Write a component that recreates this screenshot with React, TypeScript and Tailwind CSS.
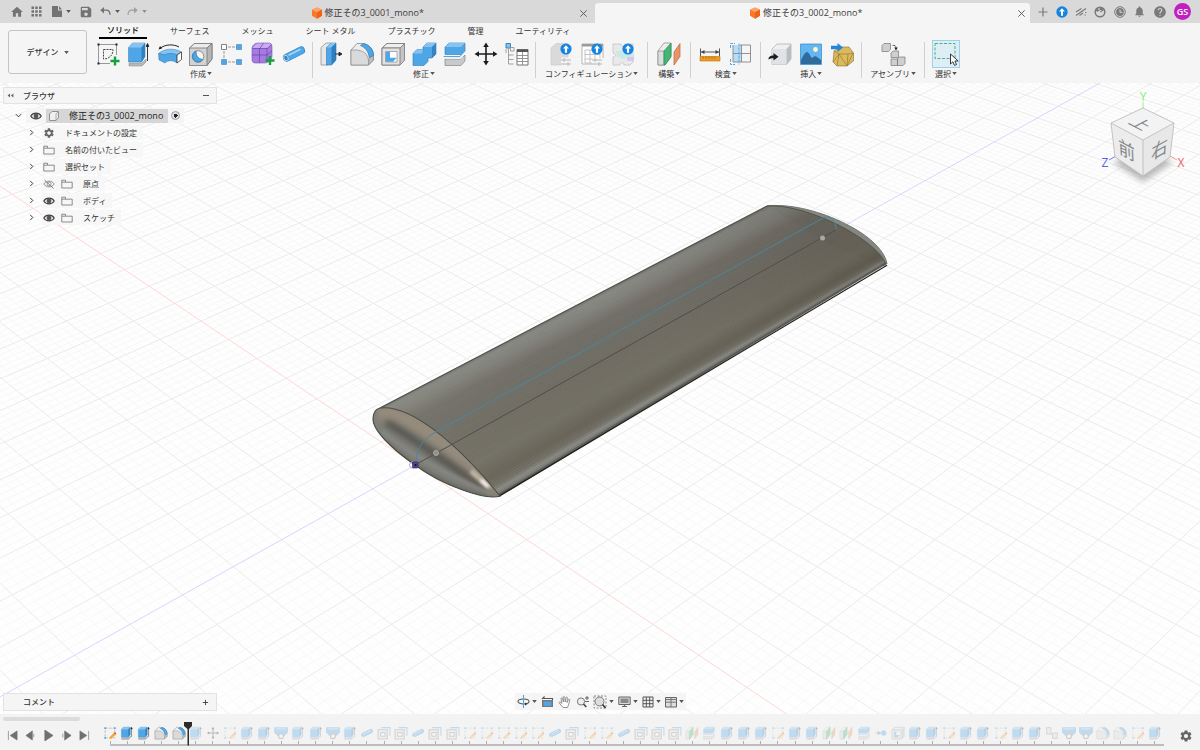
import React from "react";
import { MdHome, MdNotifications, MdHelp, MdSettings, MdSave } from "react-icons/md";

/* ---------- shared bits ---------- */

const BLUE = "#4ea6e6";
const BLUE_LIGHT = "#86c3f0";
const BLUE_DARK = "#2f78b4";

function Caret({ className = "text-[#555]" }: { className?: string }) {
  return (
    <svg viewBox="0 0 6 4" className={`h-[3px] w-[5px] shrink-0 ${className}`} aria-hidden="true">
      <path d="M0 0h6L3 4z" fill="currentColor" />
    </svg>
  );
}

function Plus({ x, y }: { x: number; y: number }) {
  return <path d={`M${x - 4.5} ${y}h9M${x} ${y - 4.5}v9`} stroke="#14a03c" strokeWidth="2.4" fill="none" />;
}

function Badge() {
  return (
    <g>
      <circle cx="18" cy="8" r="5.6" fill="#1583e0" />
      <path d="M18 4.2l3 3.400h-1.900v4.100h-2.200V7.600H15z" fill="#fff" />
    </g>
  );
}

function Adjust() {
  return <path d="M13 19h10M13 23h10M16 17.2v3.600M20 21.2v3.600" stroke="#b5b5b5" strokeWidth="1" fill="none" />;
}

type IconName =
  | "sketch" | "extrude" | "revolve" | "hole" | "pattern" | "form" | "pipe"
  | "press" | "fillet" | "shell" | "combine" | "split" | "move" | "params"
  | "cfgBody" | "cfgTable" | "cfgPuzzle" | "plane" | "measure" | "section"
  | "derive" | "canvas" | "mesh" | "assemble" | "select"
  | "editSketch" | "loft" | "offset" | "align" | "rigid";

function Glyph({ name }: { name: IconName }) {
  switch (name) {
    case "sketch":
      return (
        <g fill="none" stroke="#222">
          <path d="M3.500 3.500H22M3.500 3.500V22.500M3.500 22.500H15M21.500 3.500V14" stroke="#999" />
          <path d="M8.500 8.500h9.500c0 6-4 9.500-9.500 9.500z" stroke="#444" strokeDasharray="2 1" />
          <path d="M2.500 2.500h2v2h-2zM20.500 2.500h2v2h-2zM2.500 21.500h2v2h-2z" fill="#222" stroke="none" />
          <Plus x={20} y={20} />
        </g>
      );
    case "extrude":
      return (
        <g>
          <path d="M3 22l13 0 4-4v3l-4 4H3z" fill="#b8b8b8" stroke="#888" strokeWidth=".5" />
          <path d="M2.500 6.500l4-4.500h12.500v13.500l-3.500 5.500h-13z" fill={BLUE} stroke={BLUE_DARK} strokeWidth=".5" />
          <path d="M2.500 6.500l4-4.500h12.500l-3.500 4.500z" fill={BLUE_LIGHT} />
          <path d="M15.500 6.500L19 2v13.500l-3.500 5.500z" fill="#3181c0" />
          <path d="M21.500 20V3M20.200 5.500l1.300-3 1.300 3z" stroke="#222" strokeWidth=".9" fill="#222" />
        </g>
      );
    case "revolve":
      return (
        <g>
          <path d="M3 7.500C8 3 17 3 22 6" fill="none" stroke="#222" />
          <path d="M1.500 8.500l1.500-3.500 2 2.500z" fill="#222" />
          <path d="M1.500 12.500C8 7 18 7 24.500 11l-4.500 3c-5-2-9-2-12 0z" fill={BLUE_LIGHT} stroke={BLUE_DARK} strokeWidth=".5" />
          <path d="M1.500 12.500L8 14c3-2 8-2 12 0v8c-4-3-9-3-12 0l-6-3z" fill={BLUE} stroke={BLUE_DARK} strokeWidth=".5" />
          <path d="M20 14l4.500-3v7.500L20 22z" fill="#fff" stroke="#333" strokeWidth=".8" />
        </g>
      );
    case "hole":
      return (
        <g stroke="#777" strokeWidth=".8">
          <path d="M1.500 7l5-4.500h17.500v15.500l-5 6.500H1.500z" fill="#d3d3d3" />
          <path d="M1.500 7l5-4.500h17.500L19 7z" fill="#ececec" />
          <path d="M19 7l5-4.500V18l-5 6.500z" fill="#b5b5b5" />
          <circle cx="10" cy="15.500" r="5.800" fill="#f5f5f5" />
          <path d="M8 10.200a5.600 5.600 0 1 0 6.800 8.200C10 18 8 15 8 10.200z" fill={BLUE} stroke={BLUE_DARK} />
        </g>
      );
    case "pattern":
      return (
        <g>
          <path d="M5 6h15M5 21h15M5 6v15" stroke="#999" fill="none" strokeDasharray="3 1" />
          <path d="M2.500 3.500h5v5h-5z" fill="#fff" stroke="#666" strokeWidth=".8" />
          <path d="M17.500 3.500h5v5h-5zM2.500 18.500h5v5h-5zM17.500 18.500h5v5h-5z" fill={BLUE} stroke={BLUE_DARK} strokeWidth=".5" />
        </g>
      );
    case "form":
      return (
        <g>
          <path d="M2 8c0-4 3-6 7-6h9c3 0 4 1 4 4v8c0 5-3 8-8 8H6c-3 0-4-1-4-4z" fill="#a57be0" stroke="#7a4fb8" strokeWidth=".6" />
          <path d="M3 7c2-4 4-4.500 8-4.500h8c2 0 2 2 1 2.500-2 2-4 2.500-7 2.500z" fill="#c9acf0" />
          <path d="M2 14h15l5-4M9.500 22V8l4-6M17 21V8l4-4M2.500 7.500H17" fill="none" stroke="#6b3fa8" strokeWidth=".7" />
          <Plus x={20} y={19.500} />
        </g>
      );
    case "pipe":
      return (
        <g>
          <path d="M6 16.500L20 9.500" stroke={BLUE_DARK} strokeWidth="8" strokeLinecap="round" />
          <path d="M6 16.500L20 9.500" stroke={BLUE} strokeWidth="7" strokeLinecap="round" />
          <path d="M8 14L19 8.500" stroke="#a7d5f5" strokeWidth="1.600" strokeLinecap="round" />
          <ellipse cx="5" cy="17" rx="2" ry="2.800" fill="#3684bf" stroke="#d8edfa" strokeWidth=".7" transform="rotate(-25 5 17)" />
        </g>
      );
    case "press":
      return (
        <g>
          <path d="M3 6.500L8 2h5l-3 4v18H3z" fill="#e6e6e6" stroke="#888" strokeWidth=".7" />
          <path d="M8.500 6.500L13 2h5v17l-4.500 5h-5z" fill={BLUE} stroke={BLUE_DARK} strokeWidth=".6" />
          <path d="M8.500 6.500L13 2h5l-4.500 4.500z" fill={BLUE_LIGHT} />
          <path d="M13.500 6.500L18 2v17l-4.500 5z" fill="#2f7dbd" />
          <path d="M17 13h5M21 11.200l3 1.800-3 1.800z" stroke="#222" strokeWidth=".9" fill="#222" />
        </g>
      );
    case "fillet":
      return (
        <g strokeWidth=".7">
          <path d="M2 9l6-6.500h4C19 2.500 24.500 8 24.500 15v4l-5 5H2z" fill="#ededed" stroke="#777" />
          <path d="M19.500 24v-4c0-3 1-4 5-6v5z" fill="#bdbdbd" stroke="#888" />
          <path d="M2 9h4c8 0 13.500 4 13.500 11.500V24H2z" fill="#dadada" stroke="#8a8a8a" />
          <path d="M11.500 4.500l3-2C20 3.500 24.500 8 24.500 14.500l-4.200 2C19.500 10 16 6.500 11.500 4.500z" fill={BLUE} stroke={BLUE_DARK} />
        </g>
      );
    case "shell":
      return (
        <g strokeWidth=".8" stroke="#777">
          <path d="M2 7l5-4.500h17.500v17L20 24H2z" fill="#c4c4c4" />
          <path d="M2 7l5-4.500h17.500L20 7z" fill="#efefef" />
          <path d="M2 7h18v17H2z" fill="#e2e2e2" />
          <path d="M5.500 10.500h11.500v10.500h-11.500z" fill="#fff" stroke="#999" />
          <path d="M5.800 10.800h4.200v6h6.700L13 20.700H5.800z" fill={BLUE} stroke="none" />
        </g>
      );
    case "combine":
      return (
        <g stroke={BLUE_DARK} strokeWidth=".6">
          <path d="M2 12.500l4-4h6V6l4-4h9v11l-4 4h-4v3.500L13 24.500H2z" fill={BLUE} />
          <path d="M2 12.500l4-4h6l-1 4zM12 6l4-4h9l-4 4z" fill={BLUE_LIGHT} stroke="none" />
          <path d="M21 6l4-4v11l-4 4z" fill="#3585c5" stroke="none" />
        </g>
      );
    case "split":
      return (
        <g strokeWidth=".6">
          <path d="M3 6l4-4h16v7l-4 4.500H3z" fill={BLUE} stroke={BLUE_DARK} />
          <path d="M3 6l4-4h16l-4 4z" fill={BLUE_LIGHT} />
          <path d="M3 18h16l4-4v6l-4 4.500H3z" fill="#c9c9c9" stroke="#777" />
          <path d="M3 18l3-2h15l-2 2z" fill="#eee" />
          <path d="M1.500 15.500H18l5.500-6" stroke={BLUE} fill="none" strokeWidth="1" />
        </g>
      );
    case "move":
      return (
        <g stroke="#1c1c1c" fill="#1c1c1c">
          <path d="M13 4v18M4 13h18" strokeWidth="1.600" />
          <path d="M13 1.500l2.800 4.500h-5.600zM13 24.500l2.800-4.500h-5.600zM1.500 13L6 10.200v5.600zM24.500 13L20 10.200v5.600z" stroke="none" />
        </g>
      );
    case "params":
      return (
        <g fill="none" strokeWidth=".9">
          <path d="M2 2.500h4.500V7H2z" fill={BLUE_LIGHT} stroke={BLUE_DARK} />
          <path d="M6.500 6.500H10V10H6.500zM2 8v4" stroke="#999" />
          <path d="M4.500 7v16M4.500 14h5M4.500 18.500h5M4.500 23h5" stroke="#999" />
          <path d="M13 8.500h11v15.500H13z" fill="#fff" stroke="#666" />
          <path d="M13 8.500h11v2.500H13z" fill="#555" />
          <path d="M13 14.500h11M13 17.500h11M13 20.500h11M18.500 11v13" stroke="#8a8a8a" />
        </g>
      );
    case "cfgBody":
      return (
        <g>
          <path d="M3 7l5-4.500h12V20l-4 4H3z" fill="#dadada" stroke="#c8c8c8" strokeWidth=".6" />
          <path d="M13 16.500h12V25H13z" fill="#f5f5f5" />
          <Adjust />
          <Badge />
        </g>
      );
    case "cfgTable":
      return (
        <g>
          <path d="M3 3h21v20H3z" fill="#fff" stroke="#b5b5b5" />
          <path d="M3 3h21v2.500H3z" fill="#9a9a9a" />
          <path d="M6 9h15v13H6zM6 13.500h15M6 18h15M11 9v13M16 9v13" fill="none" stroke="#c2c2c2" />
          <path d="M13 17h12v8H13z" fill="#f5f5f5" />
          <Adjust />
          <Badge />
        </g>
      );
    case "cfgPuzzle":
      return (
        <g>
          <path d="M3 3h8c0 3 4 3 4 0h8v18l-3 3h-6c0-3-4-3-4 0H3v-8c3 0 3-4 0-4z" fill="#e9e9e9" stroke="#c2c2c2" strokeWidth=".8" />
          <path d="M6 10h6c0 3 4 3 4 0h7v6h-7c0 3-5 3-6 0H7z" fill="#c6e9ea" />
          <path d="M17 16h7v4h-7z" fill="#d9c6ee" />
          <Badge />
        </g>
      );
    case "plane":
      return (
        <g strokeWidth=".7">
          <path d="M2 10l6-8h7v13l-6 9H2z" fill="#eee" stroke="#888" />
          <path d="M2 10h6v14H2z" fill="#ddd" stroke="#888" />
          <path d="M8 10l7-8v14l-6 8H8z" fill="#43b671" stroke="#2a8a50" />
          <path d="M18 11l6-8.500v13L18 24z" fill="#e79467" stroke="#b8683c" />
        </g>
      );
    case "measure":
      return (
        <g>
          <path d="M3.500 7.500v8M22.500 7.500v8M4 11h18" stroke="#555" fill="none" />
          <path d="M4 11l3.500-2v4zM22 11l-3.500-2v4z" fill="#444" />
          <path d="M3 15.500h20v4.500H3z" fill="#f29a1f" stroke="#b87412" strokeWidth=".6" />
          <path d="M6 15.500v2M9 15.500v2M12 15.500v2M15 15.500v2M18 15.500v2" stroke="#8a5a10" strokeWidth=".7" />
        </g>
      );
    case "section":
      return (
        <g fill="none">
          <path d="M5 4h8v17H5z" fill="#b9dcf6" />
          <path d="M12 4h10.500v17H5V4M5 12.500h17.500M13.500 4v17" stroke="#888" strokeWidth=".9" />
          <path d="M2.500 7V2.500H7M2.500 18v5.500H7M11 2.500v21" stroke={BLUE} strokeDasharray="3 1" />
        </g>
      );
    case "derive":
      return (
        <g>
          <path d="M5 8l5-5h14v15l-4.500 5.500H5z" fill="#f0f0f0" stroke="#aaa" strokeWidth=".7" />
          <path d="M5 8h14.500v15.500H5z" fill="#e0e2e7" />
          <path d="M19.500 8L24 3v15l-4.500 5.500z" fill="#b9bcc2" />
          <path d="M1.500 18.500c0-3 2-4 5-4V12l5 3.800-5 3.700v-2.300c-2.500 0-3.500.300-5 1.300z" fill="#1c1c1c" />
        </g>
      );
    case "canvas":
      return (
        <g>
          <path d="M2.500 3h21v20.500h-21z" fill="#63b6f2" stroke="#2f86c7" strokeWidth=".7" />
          <circle cx="17.500" cy="8.500" r="2.400" fill="#fdf6c8" />
          <path d="M3 19c2-4 4-8 6-8s3 4 5 6c2-2 4-2 5-1l4 3v4H3z" fill="#2f6c9b" />
        </g>
      );
    case "mesh":
      return (
        <g strokeWidth=".6" stroke="#8a7030">
          <path d="M5 10l6-4h9l4.500 6v8L18 25H8l-4-4z" fill="#dcb95c" />
          <path d="M5 10l5 3h9l5.500-1M10 13l-2 12M19 13l-1 12M4 21l6-8 8 12 6-13" fill="none" />
          <path d="M2 4.800h6.500V2l5.500 4.500-5.500 4.500V8.200H2z" fill="#2287dc" stroke="none" />
        </g>
      );
    case "assemble":
      return (
        <g fill="#cfcfcf" stroke="#777" strokeWidth=".7">
          <path d="M2 4.500l2-2h6.500v6l-2 2H2z" />
          <path d="M11 12l2-2h5.500v6.500H11z" />
          <path d="M11 18h6.500v6.500H11zM17.500 18l2-2H25v6.500l-2 2h-5.500z" />
          <path d="M12.500 4.500c2-.5 3.500 0 3.500 2.500" fill="none" stroke="#222" />
          <path d="M14.300 6.500h3.400L16 9.500z" fill="#222" stroke="none" />
        </g>
      );
    case "select":
      return (
        <g>
          <path d="M2 2.500h20v15H2z" fill="none" stroke="#4db37a" strokeDasharray="3 1.500" />
          <path d="M17.500 13v10l2.400-2.200 1.600 3.600 2-.9-1.600-3.500h3.300z" fill="#fff" stroke="#222" strokeWidth=".9" />
        </g>
      );
    case "editSketch":
      return (
        <g fill="none">
          <path d="M4 4h18v18H4z" stroke="#aaa" strokeWidth="1.300" strokeDasharray="5 2" />
          <path d="M2.500 2.500h3v3h-3zM20.500 2.500h3v3h-3zM2.500 20.500h3v3h-3z" fill="#4ea6e6" />
          <path d="M12 24l1-4 7-7 3 3-7 7z" fill="#f5a623" />
          <path d="M20 13l3 3 2-2-3-3z" fill="#e24b3b" />
        </g>
      );
    case "loft":
      return (
        <g strokeWidth="1">
          <path d="M1 3h24v9l-6 6H7l-6-6z" fill={BLUE} stroke={BLUE_DARK} />
          <path d="M1 3h24l-5 4H6z" fill={BLUE_LIGHT} />
          <circle cx="13" cy="19" r="4.500" fill="#f5f5f5" stroke="#777" strokeWidth="2" />
        </g>
      );
    case "offset":
      return (
        <g fill="none" strokeWidth="2">
          <path d="M8 3h16v15" stroke={BLUE} />
          <path d="M2 7h17v17H2z" stroke="#888" fill="#e6e6e6" />
          <path d="M7 12h8v7H7z" stroke="#888" fill="#fff" />
        </g>
      );
    case "align":
      return (
        <g>
          <path d="M3 13h9" stroke="#777" strokeWidth="2" />
          <path d="M7 9l6 4-6 4z" fill="#777" />
          <circle cx="18" cy="13" r="5" fill={BLUE} />
        </g>
      );
    case "rigid":
      return (
        <g fill="#ddd" stroke="#888" strokeWidth="1.500">
          <path d="M3 3h8v12H3zM9 15h6M14 13h9v10h-9z" />
        </g>
      );
  }
}

function Icon({ name, className = "size-[26px]" }: { name: IconName; className?: string }) {
  return (
    <svg viewBox="0 0 26 26" className={`shrink-0 ${className}`} aria-hidden="true">
      <Glyph name={name} />
    </svg>
  );
}

/* ---------- title bar ---------- */

function DocCube() {
  return (
    <svg viewBox="0 0 12 12" className="size-3 shrink-0" aria-hidden="true">
      <path d="M6 .5l5 2.300v6L6 11.700 1 8.800v-6z" fill="#f9762b" />
      <path d="M6 .5l5 2.300L6 5.300 1 2.800z" fill="#ffa468" />
      <path d="M6 5.300l5-2.500v6L6 11.700z" fill="#ee6414" />
    </svg>
  );
}

function DocTab({ title, active = false }: { title: string; active?: boolean }) {
  return (
    <div
      className={
        active
          ? "mt-[3px] flex flex-1 items-center rounded-t-[3px] bg-[#f5f5f5] pr-1"
          : "mt-[3px] flex flex-1 items-center pr-[7px]"
      }
    >
      <button type="button" className="flex flex-1 items-center justify-center gap-[2px] text-[9px] leading-4 text-[#3c3c3c]">
        <DocCube />
        {title}
      </button>
      <button type="button" aria-label="閉じる" className="text-[#555]">
        <svg viewBox="0 0 10 10" className="size-[9px]" aria-hidden="true">
          <path d="M1.500 1.500l7 7M8.500 1.500l-7 7" stroke="currentColor" strokeWidth="1" />
        </svg>
      </button>
    </div>
  );
}

function TitleBar() {
  return (
    <header className="flex h-[23px] shrink-0 bg-[#d9d9d9]">
      <div className="flex w-[156px] shrink-0 items-center pl-[10px] text-[#737373]">
        <button type="button" aria-label="ホーム"><MdHome className="size-[14px]" /></button>
        <button type="button" aria-label="データ パネル" className="ml-[7px]">
          <svg viewBox="0 0 11 11" className="size-[11px]" aria-hidden="true">
            <path d="M.5.5h2.500V3H.5zM4.200.5h2.500V3H4.200zM8 .5h2.500V3H8zM.5 4.200h2.500v2.500H.5zM4.200 4.200h2.500v2.500H4.200zM8 4.200h2.500v2.500H8zM.5 8h2.500v2.500H.5zM4.200 8h2.500v2.500H4.200zM8 8h2.500v2.500H8z" fill="currentColor" />
          </svg>
        </button>
        <button type="button" aria-label="ファイル" className="ml-[10px] flex items-center gap-1">
          <svg viewBox="0 0 10 11" className="h-[11px] w-[10px]" aria-hidden="true">
            <path d="M0 0h6v4.500h4V11H0zM7 0l3 3.500H7z" fill="currentColor" />
          </svg>
          <Caret />
        </button>
        <button type="button" aria-label="保存" className="ml-[8px]"><MdSave className="size-[14px]" /></button>
        <button type="button" aria-label="元に戻す" className="ml-[7px] flex items-center gap-1">
          <svg viewBox="0 0 11 9" className="h-[9px] w-[11px]" aria-hidden="true">
            <path d="M1 3.200h5c2.500 0 4 1.500 4 4.500" fill="none" stroke="currentColor" strokeWidth="1.300" />
            <path d="M4 0L.3 3.200 4 6.500z" fill="currentColor" />
          </svg>
          <Caret />
        </button>
        <button type="button" aria-label="やり直し" className="ml-[7px] flex items-center gap-1 text-[#a0a0a0]">
          <svg viewBox="0 0 11 9" className="h-[9px] w-[11px]" aria-hidden="true">
            <path d="M10 3.200H5C2.500 3.200 1 4.700 1 7.700" fill="none" stroke="currentColor" strokeWidth="1.300" />
            <path d="M7 0l3.700 3.200L7 6.500z" fill="currentColor" />
          </svg>
          <Caret className="text-[#909090]" />
        </button>
      </div>
      <DocTab title="修正その3_0001_mono*" />
      <DocTab title="修正その3_0002_mono*" active />
      <div className="flex w-[170px] shrink-0 items-center justify-between pr-[9px] pl-[7px] text-[#7a7a7a]">
        <button type="button" aria-label="新規デザイン">
          <svg viewBox="0 0 12 12" className="size-3" aria-hidden="true"><path d="M6 1.500v9M1.500 6h9" stroke="currentColor" strokeWidth="1.200" /></svg>
        </button>
        <button type="button" aria-label="拡張機能">
          <svg viewBox="0 0 12 12" className="size-3" aria-hidden="true">
            <circle cx="6" cy="6" r="5.700" fill="#1583e0" />
            <path d="M6 2.200l3 3.300H7v4.200H5V5.500H3z" fill="#fff" />
          </svg>
        </button>
        <button type="button" aria-label="オンライン状態">
          <svg viewBox="0 0 12 12" className="size-3" aria-hidden="true">
            <path d="M1 6L6.500 2.500M1 9.500L11 2.500M4.500 9.500L8 7" stroke="currentColor" strokeWidth="1.200" fill="none" />
            <path d="M10 6.500h1.300M9.500 9h1.300" stroke="currentColor" strokeWidth="1.200" />
          </svg>
        </button>
        <button type="button" aria-label="更新">
          <svg viewBox="0 0 12 12" className="size-3" aria-hidden="true">
            <circle cx="6" cy="6" r="4.800" fill="none" stroke="currentColor" strokeWidth="1.500" />
            <path d="M1 4.500l2.500 1.300L6 4.500 3.500 2z" fill="currentColor" />
            <path d="M6 1l4.500 2.500L7 6.500 5 4z" fill="currentColor" />
            <path d="M4.500 3.500l3 1.500" stroke="#d9d9d9" />
          </svg>
        </button>
        <button type="button" aria-label="ジョブ ステータス">
          <svg viewBox="0 0 12 12" className="size-3" aria-hidden="true">
            <circle cx="6" cy="6" r="5.300" fill="none" stroke="currentColor" strokeWidth="1" />
            <circle cx="6" cy="6" r="3.900" fill="currentColor" />
            <path d="M6 3.500V6.300h2.500" stroke="#d9d9d9" fill="none" />
          </svg>
        </button>
        <button type="button" aria-label="通知"><MdNotifications className="size-[13px]" /></button>
        <button type="button" aria-label="ヘルプ"><MdHelp className="size-[14px]" /></button>
        <button type="button" className="size-[17px] rounded-full bg-[#c21fc2] text-[9px] leading-[17px] font-semibold text-white">GS</button>
      </div>
    </header>
  );
}

/* ---------- ribbon ---------- */

const WORKSPACE_TABS = ["ソリッド", "サーフェス", "メッシュ", "シート メタル", "プラスチック", "管理", "ユーティリティ"];

const GROUPS: { label: string; icons: IconName[]; pad: string }[] = [
  { label: "作成", icons: ["sketch", "extrude", "revolve", "hole", "pattern", "form", "pipe"], pad: "pr-[5px]" },
  { label: "修正", icons: ["press", "fillet", "shell", "combine", "split", "move", "params"], pad: "px-[5px]" },
  { label: "コンフィギュレーション", icons: ["cfgBody", "cfgTable", "cfgPuzzle"], pad: "px-[9px]" },
  { label: "構築", icons: ["plane"], pad: "px-2" },
  { label: "検査", icons: ["measure", "section"], pad: "px-[6px]" },
  { label: "挿入", icons: ["derive", "canvas", "mesh"], pad: "px-[6px]" },
  { label: "アセンブリ", icons: ["assemble"], pad: "px-2" },
  { label: "選択", icons: ["select"], pad: "px-[7px]" },
];

function Ribbon() {
  return (
    <div className="flex h-[60px] shrink-0 bg-[#f5f5f5] text-[8px] text-[#333]">
      <div className="py-[7px] pr-2 pl-2">
        <button type="button" className="flex h-11 w-[79px] items-center justify-center gap-[5px] rounded-[3px] border border-[#c4c4c4] bg-[#f5f5f5] font-medium">
          デザイン
          <Caret />
        </button>
      </div>
      <div className="flex flex-col">
        <nav className="flex h-4 items-stretch pl-1">
          {WORKSPACE_TABS.map((t, i) => (
            <button
              key={t}
              type="button"
              className={
                i === 0
                  ? "mr-[7px] border-b-2 border-black px-2 leading-[14px] font-medium text-black"
                  : "px-4 leading-[14px]"
              }
            >
              {t}
            </button>
          ))}
        </nav>
        <div className="flex pt-[2px]">
          {GROUPS.map((g, i) => (
            <section key={g.label} className="flex">
              <div className={`flex flex-col items-center ${g.pad}`}>
                <div className="flex gap-[5px]">
                  {g.icons.map((n) => (
                    <button
                      key={n}
                      type="button"
                      aria-label={`${g.label} ${n}`}
                      className={n === "select" ? "-my-px border border-[#9fd0ea] bg-[#ddeef7]" : ""}
                    >
                      <Icon name={n} />
                    </button>
                  ))}
                </div>
                <button type="button" className="flex items-center gap-px leading-[13px] whitespace-nowrap">
                  {g.label}
                  <Caret />
                </button>
              </div>
              {i < GROUPS.length - 1 && <div className="mt-px h-9 w-px bg-[#d0d0d0]" />}
            </section>
          ))}
        </div>
      </div>
    </div>
  );
}

/* ---------- viewport scene ---------- */

type Pt = [number, number];

/* Ground plane cell (u, v) to screen, through the camera's perspective. */
function project(u: number, v: number): Pt {
  const n = u + v;
  const w = 1 - 0.01979 * n;
  return [594 + (-178.5 + 38.4 * (u - v)) / w, (465 + 14.2 * n) / w];
}

function gridPath(keep: (i: number) => boolean) {
  const near = 10.5;
  const far = -29;
  let d = "";
  for (let i = -150; i <= 110; i++) {
    if (!keep(i)) continue;
    const c = i / 5;
    const a = project(c, far - c);
    const b = project(c, near - c);
    const e = project(far - c, c);
    const f = project(near - c, c);
    d += `M${a[0].toFixed(1)} ${a[1].toFixed(1)}L${b[0].toFixed(1)} ${b[1].toFixed(1)}`;
    d += `M${e[0].toFixed(1)} ${e[1].toFixed(1)}L${f[0].toFixed(1)} ${f[1].toFixed(1)}`;
  }
  return d;
}

const MINOR = gridPath((i) => i % 5 !== 0);
const MAJOR = gridPath((i) => i % 5 === 0 && i !== 0);

function bezier(p: Pt[], t: number): Pt {
  const s = 1 - t;
  const k = [s * s * s, 3 * s * s * t, 3 * s * t * t, t * t * t];
  return [
    p[0][0] * k[0] + p[1][0] * k[1] + p[2][0] * k[2] + p[3][0] * k[3],
    p[0][1] * k[0] + p[1][1] * k[1] + p[2][1] * k[2] + p[3][1] * k[3],
  ];
}

const NEAR_ARC: Pt[] = [[380, 408], [410, 404], [457, 443], [500, 496]];
const FAR_ARC: Pt[] = [[767, 206], [802, 203], [873, 236], [886, 264]];

const SHADES: [number, number, number, number][] = [
  [0, 112, 114, 107],
  [0.08, 136, 138, 132],
  [0.2, 130, 130, 124],
  [0.34, 113, 109, 102],
  [0.48, 109, 108, 101],
  [0.62, 110, 106, 97],
  [0.8, 113, 110, 99],
  [0.9, 101, 96, 84],
  [0.945, 112, 109, 100],
  [0.975, 142, 144, 139],
  [1, 70, 70, 66],
];

function shade(t: number) {
  let i = 0;
  while (i < SHADES.length - 2 && SHADES[i + 1][0] < t) i++;
  const a = SHADES[i];
  const b = SHADES[i + 1];
  const f = (t - a[0]) / (b[0] - a[0]);
  const mix = (j: number) => Math.round(a[j] + (b[j] - a[j]) * f);
  return `rgb(${mix(1)},${mix(2)},${mix(3)})`;
}

const STRIPS = Array.from({ length: 80 }, (_, i) => {
  const t0 = i / 80;
  const t1 = (i + 1) / 80;
  const pts = [bezier(NEAR_ARC, t0), bezier(FAR_ARC, t0), bezier(FAR_ARC, t1), bezier(NEAR_ARC, t1)];
  return { fill: shade((t0 + t1) / 2), points: pts.map((p) => p.map((c) => c.toFixed(2)).join(",")).join(" ") };
});

const CAP = "M380 408C410 404 457 443 500 496C485 501 440 484 415 465C392 449 372 430 373 418C374 411 376 409 380 408Z";

function Scene() {
  const zNear = project(0, 10);
  const zFar = project(0, -28);
  const xNear = project(10, 0);
  const xFar = project(-28, 0);
  return (
    <svg viewBox="0 83 1200 631" preserveAspectRatio="xMidYMid slice" className="absolute inset-0 size-full" aria-label="3D ビュー" role="img">
      <defs>
        <clipPath id="cap"><path d={CAP} /></clipPath>
        <filter id="soft" x="-20%" y="-20%" width="140%" height="140%"><feGaussianBlur stdDeviation="3" /></filter>
        <filter id="soft2" x="-50%" y="-50%" width="200%" height="200%"><feGaussianBlur stdDeviation="1.600" /></filter>
        <linearGradient id="along" gradientUnits="userSpaceOnUse" x1="440" y1="460" x2="830" y2="240">
          <stop offset="0" stopColor="#8a8a7a" stopOpacity=".16" />
          <stop offset=".5" stopColor="#6a675c" stopOpacity=".05" />
          <stop offset="1" stopColor="#3c362a" stopOpacity=".2" />
        </linearGradient>
      </defs>
      <rect x="-600" y="0" width="2400" height="900" fill="#fefefe" />
      <path d={MINOR} stroke="#f8f8f8" strokeWidth="1" fill="none" />
      <path d={MAJOR} stroke="#ebebeb" strokeWidth="1" fill="none" />
      <path d={`M${xFar.join(" ")}L${xNear.join(" ")}`} stroke="#ffd6d6" strokeWidth="1" />
      <path d={`M${zFar.join(" ")}L${zNear.join(" ")}`} stroke="#d6d6ff" strokeWidth="1" />

      {/* wing body */}
      <path d="M767 206C809 201 882 233 887 264L884 266L830 245Z" fill="#858881" />
      {STRIPS.map((s, i) => (
        <polygon key={i} points={s.points} fill={s.fill} stroke={s.fill} strokeWidth=".7" />
      ))}
      <path d="M380 408L767 206C802 203 873 236 886 264L500 496C457 443 410 404 380 408Z" fill="url(#along)" />
      <path d="M767 206C809 201 882 233 887 264" fill="none" stroke="#73766f" strokeWidth="1" />
      <path d="M767 206C802 203 873 236 886 264" fill="none" stroke="#55544d" strokeWidth="1" />
      <path d="M380 408L767 206" stroke="#55564f" strokeWidth="1.200" />
      <path d="M498 496.700L887 265.200" stroke="#1f1d19" strokeWidth="1.200" />

      {/* near end cap */}
      <path d={CAP} fill="#7d7e77" />
      <g clipPath="url(#cap)" fill="none">
        <path d="M378 413C410 410 460 452 496 492" stroke="#958b7d" strokeWidth="16" filter="url(#soft)" />
        <path d="M386 422C412 437 450 466 488 490" stroke="#4a463f" strokeWidth="6" filter="url(#soft)" opacity=".9" />
        <path d="M382 431C410 455 450 476 490 494" stroke="#858682" strokeWidth="4" filter="url(#soft2)" />
        <path d="M386 442C410 466 450 488 492 499" stroke="#6a6c63" strokeWidth="4" filter="url(#soft2)" />
        <path d="M471 471L490 488" stroke="#c0b6a6" strokeWidth="5" filter="url(#soft2)" />
        <path d="M481 480L488 486.500" stroke="#fff" strokeWidth="3" filter="url(#soft2)" />
      </g>
      <path d={CAP} fill="none" stroke="#4a4b44" strokeWidth="1.100" />

      {/* sketch curves */}
      <path d="M416 464C416 446 425 437 440 430L823 218C830 215 836 220 836 230" fill="none" stroke="#4a86a0" strokeWidth="1" />
      <path d="M415 465L836 230" stroke="#4f4e49" strokeWidth="1" />
      <circle cx="436" cy="453" r="2.500" fill="#8f8f89" stroke="#b5b5af" strokeWidth=".8" />
      <circle cx="822.500" cy="238" r="2.500" fill="#a9a9a4" />
      <circle cx="412.500" cy="465" r="3" fill="none" stroke="#aaa" />
      <rect x="412.500" y="462" width="5.500" height="6" rx="1" fill="#5a3d9a" stroke="#2b2050" strokeWidth=".6" />
      <circle cx="415.500" cy="465" r="1" fill="#111" />
    </svg>
  );
}

function ViewCube() {
  return (
    <svg viewBox="0 -6 96 106" className="h-[106px] w-24" role="img" aria-label="ビューキューブ">
      <defs>
        <filter id="shadow" x="-30%" y="-30%" width="160%" height="160%"><feGaussianBlur stdDeviation="3" /></filter>
      </defs>
      <path d="M16 72L46 92L76 72L46 60Z" fill="#888" opacity=".6" filter="url(#shadow)" />
      <path d="M46 12v7" stroke="#8ff58f" />
      <path d="M12 70l7-4" stroke="#7d7de8" />
      <path d="M80 70l-7-4" stroke="#f59a9a" />
      <path d="M46 18L77 33L46 50L14 33Z" fill="#f3f3f3" />
      <path d="M14 33L46 50V86L18 67Z" fill="#ececec" />
      <path d="M77 33L46 50V86L73 67Z" fill="#e8e8e8" />
      <path d="M46 18L77 33L46 50L14 33ZM14 33L18 67L46 86L73 67L77 33M46 50V86" fill="none" stroke="#bdbdbd" strokeWidth=".9" />
      <g fill="#85888c" fontSize="19" textAnchor="middle">
        <text transform="matrix(.8 .42 -.8 .42 38 37)">上</text>
        <text transform="matrix(.88 .46 .06 1 30 67)">前</text>
        <text transform="matrix(.88 -.5 -.06 1 62 66)">右</text>
      </g>
      <g fontSize="12" textAnchor="middle">
        <text x="46" y="11" fill="#7dee7d">Y</text>
        <text x="8" y="77" fill="#5c5ce6">Z</text>
        <text x="84" y="77" fill="#f06060">X</text>
      </g>
    </svg>
  );
}

/* ---------- browser panel ---------- */

function Chevron({ open = false }: { open?: boolean }) {
  return (
    <svg viewBox="0 0 8 8" className="size-[7px]" aria-hidden="true">
      <path d={open ? "M1 2.500l3 3 3-3" : "M2.500 1l3 3-3 3"} stroke="#333" strokeWidth="1.100" fill="none" />
    </svg>
  );
}

function Eye({ hidden = false }: { hidden?: boolean }) {
  return (
    <svg viewBox="0 0 12 10" className="h-[10px] w-3" aria-hidden="true">
      <path d="M.8 5C3 1.200 9 1.200 11.200 5 9 8.800 3 8.800.8 5z" fill="none" stroke={hidden ? "#888" : "#444"} strokeWidth={hidden ? 0.9 : 1.2} />
      <circle cx="6" cy="5" r="2" fill={hidden ? "none" : "#555"} stroke={hidden ? "#888" : "#444"} strokeWidth=".8" />
      {hidden && <path d="M1.500 1l9 8.500" stroke="#777" strokeWidth=".9" />}
    </svg>
  );
}

function Folder() {
  return (
    <svg viewBox="0 0 12 10" className="h-[10px] w-3" aria-hidden="true">
      <path d="M.8 9V1.200h3.700v2h6.700V9zM.8 3.200h3.700" fill="none" stroke="#808080" strokeWidth=".9" />
    </svg>
  );
}

const TREE: { label: string; icon: "gear" | "folder"; eye?: "on" | "off" }[] = [
  { label: "ドキュメントの設定", icon: "gear" },
  { label: "名前の付いたビュー", icon: "folder" },
  { label: "選択セット", icon: "folder" },
  { label: "原点", icon: "folder", eye: "off" },
  { label: "ボディ", icon: "folder", eye: "on" },
  { label: "スケッチ", icon: "folder", eye: "on" },
];

function BrowserPanel() {
  return (
    <aside className="ml-[3px] w-[214px] pt-1 text-[8px] text-[#333]">
      <div className="flex h-[17px] items-center border border-[#e2e2e2] bg-[#f5f5f5] pr-[7px] pl-[3px]">
        <button type="button" aria-label="折りたたむ" className="w-4">
          <svg viewBox="0 0 8 6" className="h-[5px] w-[7px]" aria-hidden="true"><path d="M3.500.5v5L.5 3zM7.500.5v5l-3-2.500z" fill="#666" /></svg>
        </button>
        <h2 className="flex-1 font-medium">ブラウザ</h2>
        <button type="button" aria-label="最小化" className="h-px w-[6px] bg-[#555]" />
      </div>
      <ul className="pt-[3px]">
        <li className="flex h-[17px] items-center pl-3">
          <button type="button" aria-label="閉じる"><Chevron open /></button>
          <div className="ml-1 flex h-[15px] items-center bg-[#f5f5f5] pr-1 pl-1">
            <button type="button" aria-label="表示"><Eye /></button>
            <div className="ml-1 flex h-[14px] items-center bg-[#d6d6d6] pr-[5px] pl-[2px]">
              <svg viewBox="0 0 12 12" className="size-3" aria-hidden="true">
                <path d="M1.500 4l2.500-2.500h6.500v6L8 10.500H1.500z" fill="#eee" stroke="#888" strokeWidth=".9" />
                <path d="M8 4v6.500M8 4l2.500-2.500" stroke="#999" strokeWidth=".8" />
              </svg>
              <span className="ml-[9px] text-[9px] leading-[14px] text-[#222]">修正その3_0002_mono</span>
            </div>
            <input
              type="radio"
              defaultChecked
              aria-label="アクティブ"
              className="ml-[3px] size-[9px] appearance-none rounded-full border border-[#999] bg-[radial-gradient(circle,#222_0_2px,#dde2ee_2px)]"
            />
          </div>
        </li>
        {TREE.map((n) => (
          <li key={n.label} className="flex h-[17px] items-center pl-[25px]">
            <button type="button" aria-label="展開"><Chevron /></button>
            <div className="ml-[7px] flex h-[15px] items-center gap-[6px] bg-[#f7f7f7] pr-[6px] pl-px">
              {n.eye && <button type="button" aria-label="表示"><Eye hidden={n.eye === "off"} /></button>}
              {n.icon === "gear" ? <MdSettings className="size-3 text-[#666]" /> : <Folder />}
              <span className="pl-1 whitespace-nowrap">{n.label}</span>
            </div>
          </li>
        ))}
      </ul>
    </aside>
  );
}

/* ---------- bottom of viewport ---------- */

function NavBar() {
  const btn = "flex items-center gap-[2px]";
  return (
    <div className="flex h-[17px] items-center gap-1 bg-[#f5f5f5] px-[2px]">
      <button type="button" aria-label="オービット" className={btn}>
        <svg viewBox="0 0 13 13" className="size-[13px]" aria-hidden="true">
          <ellipse cx="6.500" cy="6.500" rx="5.500" ry="2.500" fill="none" stroke="#555" strokeWidth="1.100" />
          <path d="M6.500 0v13" stroke="#4ea6e6" strokeWidth="1.100" />
          <path d="M8 7.500l2.500 1.500L8 10.500z" fill="#333" />
        </svg>
        <Caret />
      </button>
      <button type="button" aria-label="ビュー正面">
        <svg viewBox="0 0 13 13" className="size-[13px]" aria-hidden="true">
          <path d="M1 5h11v7H1z" fill="#777" />
          <path d="M2.500 6.500h8v4.500h-8z" fill="#4ea6e6" />
          <path d="M1 4l2-2v1.500h8.500V5" fill="none" stroke="#555" strokeWidth="1.100" />
        </svg>
      </button>
      <button type="button" aria-label="画面移動">
        <svg viewBox="0 0 14 14" className="size-[14px]" aria-hidden="true">
          <path d="M5 12.500C3.500 11 2 9 1 7.500c.8-.8 1.600-.3 2.800 1L3 3.200c1-.6 1.400 0 1.700 1L5.400 7 5.200 1.800c.9-.6 1.500-.2 1.600.7L7.200 7l.9-4.800c.9-.4 1.400.1 1.300 1L9 7.500l1.700-3.300c.9-.1 1.200.4 1 1.200-.7 2-1 5-2.200 7.100z" fill="#fff" stroke="#888" strokeWidth=".9" />
        </svg>
      </button>
      <button type="button" aria-label="ズーム">
        <svg viewBox="0 0 13 13" className="size-[13px]" aria-hidden="true">
          <circle cx="5" cy="6.500" r="3.600" fill="#eee" stroke="#777" />
          <path d="M7.500 9l2.800 3" stroke="#444" strokeWidth="1.600" />
          <path d="M9 3h4M11 1v4M9 6.500h4" stroke="#555" strokeWidth=".9" />
        </svg>
      </button>
      <button type="button" aria-label="フィット" className={btn}>
        <svg viewBox="0 0 14 14" className="size-[14px]" aria-hidden="true">
          <path d="M1 1h12v12H1z" fill="none" stroke="#888" strokeDasharray="2 1.500" />
          <circle cx="6.500" cy="6.500" r="4.500" fill="#ddd" stroke="#777" />
          <path d="M9.500 9.500l3 3.500" stroke="#333" strokeWidth="1.600" />
        </svg>
        <Caret />
      </button>
      <button type="button" aria-label="表示設定" className={btn}>
        <svg viewBox="0 0 13 13" className="size-[13px]" aria-hidden="true">
          <path d="M.8 2h11.400v7.500H.8z" fill="#ddd" stroke="#666" />
          <path d="M2.500 3.500h8V8h-8z" fill="#8a8a8a" />
          <path d="M4 11.500h5M6.500 9.500v2" stroke="#666" strokeWidth="1.200" />
        </svg>
        <Caret />
      </button>
      <button type="button" aria-label="グリッド" className={btn}>
        <svg viewBox="0 0 12 12" className="size-3" aria-hidden="true">
          <path d="M1 1h10v10H1zM1 4.300h10M1 7.700h10M4.300 1v10M7.700 1v10" fill="none" stroke="#555" />
        </svg>
        <Caret />
      </button>
      <button type="button" aria-label="ビューポート" className={btn}>
        <svg viewBox="0 0 12 12" className="size-3" aria-hidden="true">
          <path d="M.5 1.500h11v9.500H.5z" fill="#ddd" stroke="#666" />
          <path d="M.5 6.200h11M6 1.500V11M.5 3.500h11" stroke="#777" fill="none" />
        </svg>
        <Caret />
      </button>
    </div>
  );
}

/* ---------- timeline ---------- */

const CODES: Record<string, IconName> = {
  s: "editSketch", e: "extrude", f: "fillet", m: "move", l: "loft", p: "pipe",
  o: "offset", g: "plane", d: "split", a: "align", h: "shell", r: "rigid",
};

/* One letter per feature, in history order. */
const HISTORY = [
  "seeffemsee", "leelepoopo", "osssssposs", "pooogdeees", "eeggdaheese", "eseerllffse",
].join("").split("");
const MARKER_AFTER = 4;

function Timeline() {
  const controls: [string, string][] = [
    ["先頭へ", "M1.500 1v10M11 1v10L3.500 6z"],
    ["前へ", "M8 1v10L1 6zM9.500 4v4"],
    ["再生", "M2 0l9 6-9 6z"],
    ["次へ", "M4 1v10l7-5zM2 4v4"],
    ["末尾へ", "M10.500 1v10M1 1v10l7.500-5z"],
  ];
  return (
    <footer className="h-9 shrink-0 bg-[#f3f3f3] pt-[3px]">
      <div className="ml-[3px] h-1 w-[77px] rounded-full bg-[#dcdcdc]" />
      <div className="flex">
        <div className="flex items-center gap-[7px] pt-1 pl-[7px]">
          {controls.map(([label, d]) => (
            <button key={label} type="button" aria-label={label}>
              <svg viewBox="0 0 12 12" className="size-[11px]" aria-hidden="true">
                <path d={d} fill="#707070" stroke="#707070" strokeWidth=".7" />
              </svg>
            </button>
          ))}
        </div>
        <ol className="ml-3 flex flex-1 justify-between pt-[5px]">
          {HISTORY.map((c, i) => (
            <li key={i} className="relative flex w-4 flex-col items-center">
              <button type="button" aria-label={`フィーチャ ${i + 1}`} className={i > MARKER_AFTER ? "opacity-30" : ""}>
                <Icon name={CODES[c]} className="size-[14px]" />
              </button>
              <span className="mt-px h-[3px] w-px bg-[#b0b0b0]" />
              <span className={i === 0 ? "h-[2px] w-[9px] translate-x-1 bg-[#bdbdbd]" : "-mx-px h-[2px] w-[18px] bg-[#bdbdbd]"} />
              {i === MARKER_AFTER && (
                <svg viewBox="0 0 10 24" className="absolute top-[-4px] left-[12px] z-10 h-6 w-[10px]" aria-hidden="true">
                  <path d="M1 0h8v4L6 7v16.500H4.500V7L1 4z" fill="#2c2c2c" />
                </svg>
              )}
            </li>
          ))}
        </ol>
        <div className="flex w-[37px] items-center justify-center pt-1">
          <button type="button" aria-label="タイムライン設定" className="pl-2"><MdSettings className="size-[14px] text-[#666]" /></button>
        </div>
      </div>
    </footer>
  );
}

export default function App() {
  return (
    <div className="flex h-screen min-h-[600px] flex-col overflow-hidden bg-white font-['Open_Sans','Noto_Sans_CJK_JP',sans-serif]" lang="ja">
      <TitleBar />
      <Ribbon />
      <main className="relative flex flex-1 flex-col justify-between overflow-hidden">
        <Scene />
        <div className="relative flex items-start justify-between">
          <BrowserPanel />
          <div className="pt-px pr-[7px]"><ViewCube /></div>
        </div>
        <div className="relative grid grid-cols-[1fr_auto_1fr] items-start pb-[3px]">
          <div className="ml-[3px] flex h-[18px] w-[214px] items-center justify-between border border-[#e2e2e2] bg-[#f5f5f5] pr-[7px] pl-[19px] text-[8px] text-[#333]">
            <h2 className="font-medium">コメント</h2>
            <button type="button" aria-label="コメントを追加">
              <svg viewBox="0 0 8 8" className="size-[7px]" aria-hidden="true"><path d="M4 1v6M1 4h6" stroke="#444" strokeWidth="1.100" /></svg>
            </button>
          </div>
          <NavBar />
          <div />
        </div>
      </main>
      <Timeline />
    </div>
  );
}
